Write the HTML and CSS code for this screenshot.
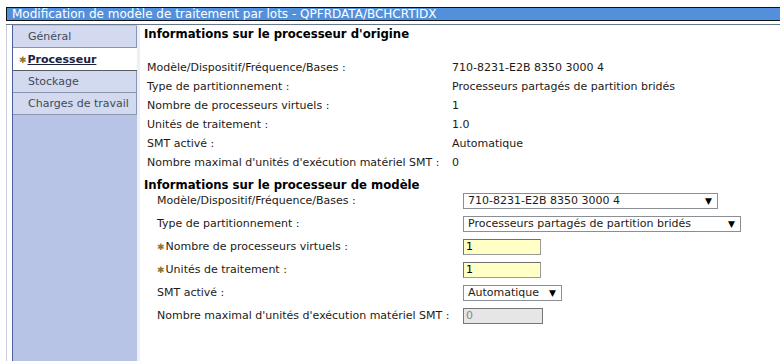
FILE: index.html
```html
<!DOCTYPE html>
<html lang="fr">
<head>
<meta charset="utf-8">
<link rel="stylesheet" href="styles.css">
</head>
<body>
<div class="titlebar">Modification de modèle de traitement par lots - QPFRDATA/BCHCRTIDX</div>
<div class="rule"></div>
<div class="main">
  <nav class="nav">
    <div class="tab">Général</div>
    <div class="tab sel"><span class="star">✱</span><a>Processeur</a></div>
    <div class="tab">Stockage</div>
    <div class="tab">Charges de travail</div>
  </nav>
  <div class="strip"></div>
  <section class="content">
    <h2 class="h1">Informations sur le processeur d'origine</h2>
    <div class="grid1">
      <div>Modèle/Dispositif/Fréquence/Bases :</div><div>710-8231-E2B 8350 3000 4</div>
      <div>Type de partitionnement :</div><div>Processeurs partagés de partition bridés</div>
      <div>Nombre de processeurs virtuels :</div><div>1</div>
      <div>Unités de traitement :</div><div>1.0</div>
      <div>SMT activé :</div><div>Automatique</div>
      <div>Nombre maximal d'unités d'exécution matériel SMT :</div><div>0</div>
    </div>
    <h2 class="h2">Informations sur le processeur de modèle</h2>
    <div class="grid2">
      <div class="lbl">Modèle/Dispositif/Fréquence/Bases :</div>
      <div><span class="sel-box w1"><span>710-8231-E2B 8350 3000 4</span><span class="arr">▼</span></span></div>
      <div class="lbl">Type de partitionnement :</div>
      <div><span class="sel-box w2"><span>Processeurs partagés de partition bridés</span><span class="arr">▼</span></span></div>
      <div class="lbl"><span class="star">✱</span>Nombre de processeurs virtuels :</div>
      <div><span class="inp">1</span></div>
      <div class="lbl"><span class="star">✱</span>Unités de traitement :</div>
      <div><span class="inp">1</span></div>
      <div class="lbl">SMT activé :</div>
      <div><span class="sel-box w3"><span>Automatique</span><span class="arr">▼</span></span></div>
      <div class="lbl">Nombre maximal d'unités d'exécution matériel SMT :</div>
      <div><span class="inp dis">0</span></div>
    </div>
  </section>
</div>
</body>
</html>
```
FILE: styles.css
```css
html, body { margin: 0; padding: 0; background: #fff; }
body { font-family: "DejaVu Sans", Verdana, sans-serif; font-size: 11px; color: #1e1a16; height: 361px; overflow: hidden; }
.titlebar { margin: 7px 0 0 6px; height: 12px; line-height: 12px; font-size: 12px; border-top: 1px solid #111; border-bottom: 1px solid #111; border-left: 1px solid #111; background: #5390dc; color: #fff; padding-left: 5px; white-space: nowrap; overflow: hidden; }
.rule { margin: 3px 0 0 6px; border-top: 1px solid #66788a; }
.main { display: flex; margin-left: 6px; border-left: 1px solid #c9ccd9; height: 336px; }
.nav { width: 124px; margin-left: 5px; border-left: 1px solid #4a5f9c; background: #b7c4e6; padding-top: 1px; }
.strip { width: 3px; background: #eef0f6; }
.tab { height: 20px; line-height: 20px; padding-top: 1px; padding-left: 15px; background: #d3d9ee; color: #3f4b5c; border-right: 1px solid #8797b8; border-bottom: 1px solid #8a96b0; white-space: nowrap; }
.tab.sel { background: #fff; height: 21px; line-height: 21px; padding-left: 6px; border-right: 1px solid #fff; border-bottom: 1px solid #555c66; margin-right: -1px; }
.tab.sel a { color: #1a2244; font-weight: bold; text-decoration: underline; }
.star { color: #8a7530; font-size: 9px; margin-right: 1px; }
.content { flex: 1; padding-left: 4px; }
h2 { margin: 0; font-size: 11.7px; font-weight: bold; color: #000; line-height: 14px; }
.h1 { margin-top: 2px; }
.grid1 { display: grid; grid-template-columns: 305px auto; grid-auto-rows: 19px; align-items: center; padding-left: 3px; margin-top: 17px; }
.h2 { margin-top: 6px; }
.grid2 { display: grid; grid-template-columns: 306px auto; grid-auto-rows: 23px; align-items: center; padding-left: 13px; margin-top: -3px; }
.lbl { white-space: nowrap; }
.sel-box { display: flex; justify-content: space-between; align-items: center; height: 14px; border: 1px solid #8a8f96; padding: 0 5px 0 4px; background: #fff; box-sizing: content-box; }
.arr { font-size: 9px; color: #000; }
.w1 { width: 244px; }
.w2 { width: 267px; }
.w3 { width: 88px; }
.inp { display: block; width: 74px; height: 14px; line-height: 14px; border: 1px solid #9a9a9a; border-top-color: #6f6f6f; border-left-color: #6f6f6f; background: #ffffc6; padding-left: 2px; box-sizing: content-box; color: #000; }
.inp.dis { width: 76px; background: #e6e6e6; color: #888; border-color: #777; }
```
